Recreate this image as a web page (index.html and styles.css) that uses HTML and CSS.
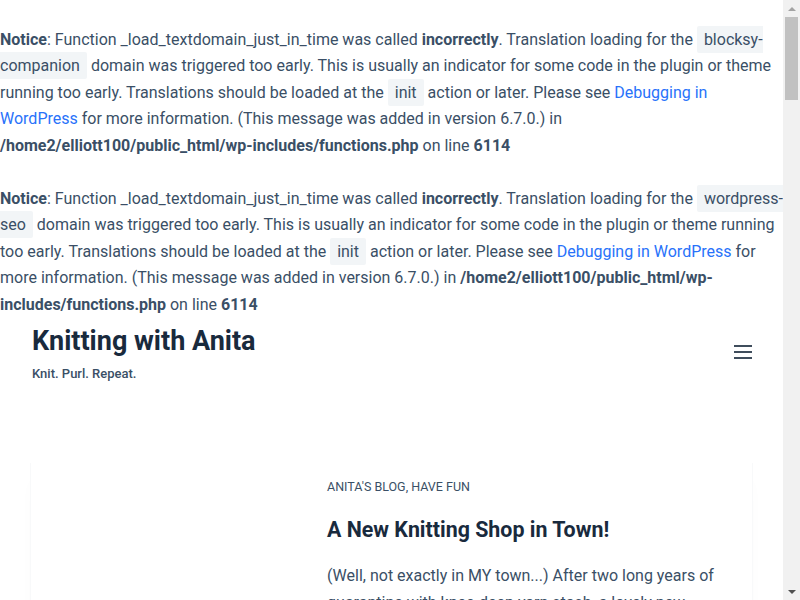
FILE: index.html
```
<!DOCTYPE html>
<html lang="en">
<head>
<meta charset="utf-8">
<title>Knitting with Anita</title>
<link rel="stylesheet" href="styles.css">
</head>
<body>
<div class="viewport">
  <div class="page">
    <div class="notices"><br><b>Notice</b>: Function _load_textdomain_just_in_time was called <b>incorrectly</b>. Translation loading for the <code>blocksy-companion</code> domain was triggered too early. This is usually an indicator for some code in the plugin or theme running too early. Translations should be loaded at the <code>init</code> action or later. Please see <a href="#">Debugging in WordPress</a> for more information. (This message was added in version 6.7.0.) in <b>/home2/elliott100/public_html/wp-includes/functions.php</b> on line <b>6114</b><br><br><b>Notice</b>: Function _load_textdomain_just_in_time was called <b>incorrectly</b>. Translation loading for the <code>wordpress-seo</code> domain was triggered too early. This is usually an indicator for some code in the plugin or theme running too early. Translations should be loaded at the <code>init</code> action or later. Please see <a href="#">Debugging in WordPress</a> for more information. (This message was added in version 6.7.0.) in <b>/home2/elliott100/public_html/wp-includes/functions.php</b> on line <b>6114</b><br></div>

    <header class="site-header">
      <div class="branding">
        <div class="site-title">Knitting with Anita</div>
        <p class="site-description">Knit. Purl. Repeat.</p>
      </div>
      <button class="menu-trigger" aria-label="Menu">
        <span class="bar"></span><span class="bar"></span><span class="bar"></span>
      </button>
    </header>

    <main class="site-main">
      <article class="card">
        <div class="card-media"></div>
        <div class="card-content">
          <div class="entry-meta">Anita's Blog, Have Fun</div>
          <h2 class="entry-title">A New Knitting Shop in Town!</h2>
          <p class="entry-excerpt">(Well, not exactly in MY town...) After two long years of quarantine with knee-deep yarn stash, a lovely new shop has opened its doors just down the road from my sister's house.</p>
        </div>
      </article>
    </main>
  </div>
  <div class="scrollbar">
    <div class="sb-arrow sb-up"></div>
    <div class="sb-track"><div class="sb-thumb"></div></div>
    <div class="sb-arrow sb-down"></div>
  </div>
</div>
</body>
</html>
```
FILE: styles.css
```
html, body {
  margin: 0;
  padding: 0;
  height: 100%;
  overflow: hidden;
}

body {
  font-family: Roboto, "Liberation Sans", sans-serif;
  color: #3a4f66;
  background: #ffffff;
}

.viewport {
  display: flex;
  height: 600px;
}

.page {
  flex: 1;
  min-width: 0;
  height: 600px;
  overflow: hidden;
}

.notices {
  font-size: 16px;
  line-height: 26.5px;
}

.notices b {
  font-weight: 700;
}

.notices code {
  font-family: inherit;
  font-size: inherit;
  background: #f2f5f7;
  padding: 4px 7px;
  border-radius: 2px;
}

.notices a {
  color: #2872fa;
  text-decoration: none;
}

.site-header {
  height: 70px;
  display: flex;
  align-items: center;
  justify-content: space-between;
  padding: 0 31px 0 32px;
}

.site-title {
  font-size: 27px;
  line-height: 36px;
  font-weight: 700;
  color: #192a3d;
}

.site-description {
  margin: 5px 0 0;
  font-size: 13px;
  line-height: 20px;
  font-weight: 500;
  color: #3a4f66;
}

.menu-trigger {
  display: flex;
  flex-direction: column;
  gap: 4px;
  width: 18px;
  padding: 0;
  margin-top: -2px;
  border: 0;
  background: none;
}

.menu-trigger .bar {
  display: block;
  width: 18px;
  height: 2px;
  background: #3f4d5c;
}

.site-main {
  padding: 75px 30px 0;
}

.card {
  display: grid;
  grid-template-columns: 266px 1fr;
  column-gap: 30px;
  padding: 14px 30px 30px 0;
  border-left: 1px solid #f8f9fa;
  border-right: 1px solid #f8f9fa;
  box-shadow: 0 12px 18px -6px rgba(34, 56, 101, 0.03);
}

.card-content {
  min-width: 0;
}

.entry-meta {
  font-size: 12.5px;
  line-height: 20px;
  font-weight: 400;
  text-transform: uppercase;
  color: #3a4f66;
}

.entry-title {
  margin: 19px 0 0;
  font-size: 21.4px;
  line-height: 28px;
  font-weight: 700;
  color: #192a3d;
}

.entry-excerpt {
  margin: 19px 0 0;
  font-size: 16px;
  line-height: 26.5px;
  color: #3a4f66;
}

.scrollbar {
  width: 17px;
  flex: none;
  display: flex;
  flex-direction: column;
  background: #f1f1f1;
}

.sb-arrow {
  height: 17px;
  flex: none;
  display: flex;
  align-items: center;
  justify-content: center;
}

.sb-up::before {
  content: "";
  border-left: 4px solid transparent;
  border-right: 4px solid transparent;
  border-bottom: 4px solid #a3a3a3;
}

.sb-down::before {
  content: "";
  border-left: 4px solid transparent;
  border-right: 4px solid transparent;
  border-top: 4px solid #505050;
}

.sb-track {
  flex: 1;
  padding: 0 2px;
}

.sb-thumb {
  height: 83px;
  background: #c1c1c1;
}
```
